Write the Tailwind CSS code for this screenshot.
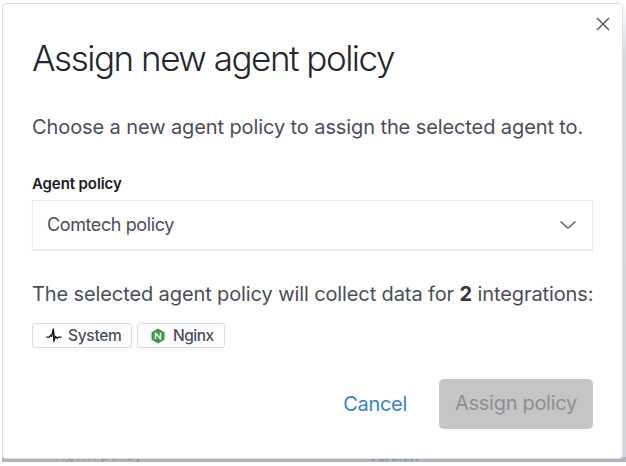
<!DOCTYPE html>
<html lang="en">
<head>
<meta charset="utf-8">
<title>Assign new agent policy</title>
<script src="https://cdn.jsdelivr.net/npm/@tailwindcss/browser@4"></script>
</head>
<body class="h-[466px] w-[626px] overflow-hidden bg-white pt-[3px] pl-[2px] font-['Inter',sans-serif] [font-optical-sizing:none]">
<div class="relative h-[459px] w-[624px] overflow-hidden bg-linear-to-b from-white via-[#d3d9de] via-12% to-[#d3d7dd]">
  <div class="absolute inset-x-0 bottom-0 h-[5px] bg-[#b1b4bb]"></div>
  <div class="absolute top-[445px] left-[53px] text-[14px] leading-[14px] font-medium tracking-[0.3px] text-[#92969e]">Agent policy</div>
  <div class="absolute top-[446px] left-[366px] text-[14px] leading-[14px] font-medium text-[#8099a8]">Version</div>
  <main class="relative flex h-[456px] w-[621px] flex-col rounded-[4px] border border-[#dcdee6] bg-white pr-[29px] pl-[29px]">
    <button class="absolute top-[12px] right-[11px] size-4" aria-label="Close">
      <svg class="size-4" viewBox="0 0 16 16" fill="none" stroke="#5a5e68" stroke-width="1.5"><path d="M2 2l12 12M14 2l-12 12"/></svg>
    </button>
    <h1 class="mt-[32px] h-[44px] text-[35px] leading-[44px] font-light tracking-[-1.48px] whitespace-nowrap text-[#24272c]">Assign new agent policy</h1>
    <p class="mt-[33px] h-[28px] text-[20px] leading-[28px] tracking-[-0.1px] whitespace-nowrap text-[#4a4e5a]">Choose a new agent policy to assign the selected agent to.</p>
    <label class="mt-[33px] h-5 text-[15px] leading-5 font-semibold tracking-[-0.1px] whitespace-nowrap text-[#1a1c21]"><span>Agent policy</span></label>
    <div class="mt-[6px] flex h-[50px] w-[561px] items-center justify-between border border-[#e9ecf2] pr-[15px] pl-[14px] shadow-[0_1px_1px_#e8edf3]">
      <span class="-mt-px text-[18px] tracking-[-0.4px] whitespace-nowrap text-[#4a4e5a]">Comtech policy</span>
      <svg class="h-4 w-[18px]" viewBox="0 0 18 16" fill="none" stroke="#5a5e68" stroke-width="1.4" stroke-linecap="round"><path d="M2 4.700l6.300 6q.7.6 1.400 0l6.300-6"/></svg>
    </div>
    <p class="mt-[30px] h-[28px] text-[20px] leading-[28px] tracking-[-0.11px] whitespace-nowrap text-[#4a4e5a]"><span>The selected agent policy will collect data for <b class="font-bold text-[#343741]">2</b> integrations:</span></p>
    <div class="mt-[15px] flex gap-[5px] text-[15.5px] font-medium text-[#4a4e5a]">
      <div class="flex h-[25px] w-[100px] items-center rounded-[3px] border border-[#d5dde8] pl-[13px]">
        <svg class="mr-[6px] size-4 shrink-0" viewBox="0 0 16 16"><path d="M.3 9.200h2.900l1.500-2 .9 1.200L7.300 1l1 11 1.300-3.600 1.700 2 1.200-1.200h2.900" fill="none" stroke="#111" stroke-width="1.300" stroke-linejoin="round"/><path d="M6.700 2.500h1.300l.7 10-1 3-.7-5z" fill="#111"/></svg>
        <span class="tracking-[-0.3px]">System</span>
      </div>
      <div class="flex h-[25px] w-[88px] items-center rounded-[3px] border border-[#d5dde8] pl-[12px]">
        <svg class="mr-[7px] size-4 shrink-0" viewBox="0 0 16 16"><path d="M8 .6l6.500 3.700v7.400L8 15.400l-6.500-3.700V4.300z" fill="#3b9b46"/><path d="M5.500 11.200V4.900l5 6.200V4.800" fill="none" stroke="#fff" stroke-width="1.500" stroke-linejoin="round"/></svg>
        <span class="tracking-[-0.5px]">Nginx</span>
      </div>
    </div>
    <div class="mt-[31px] flex h-[50px] w-[561px] items-center justify-end">
      <button class="mr-[32px] -mt-px text-[20px] tracking-[-0.3px] whitespace-nowrap text-[#3a83c3]">Cancel</button>
      <button class="h-[50px] w-[154px] rounded-[5px] bg-[#c5c5c5] pb-[2px] text-[20px] tracking-[-0.3px] whitespace-nowrap text-[#8c9094]">Assign policy</button>
    </div>
  </main>
</div>
</body>
</html>
